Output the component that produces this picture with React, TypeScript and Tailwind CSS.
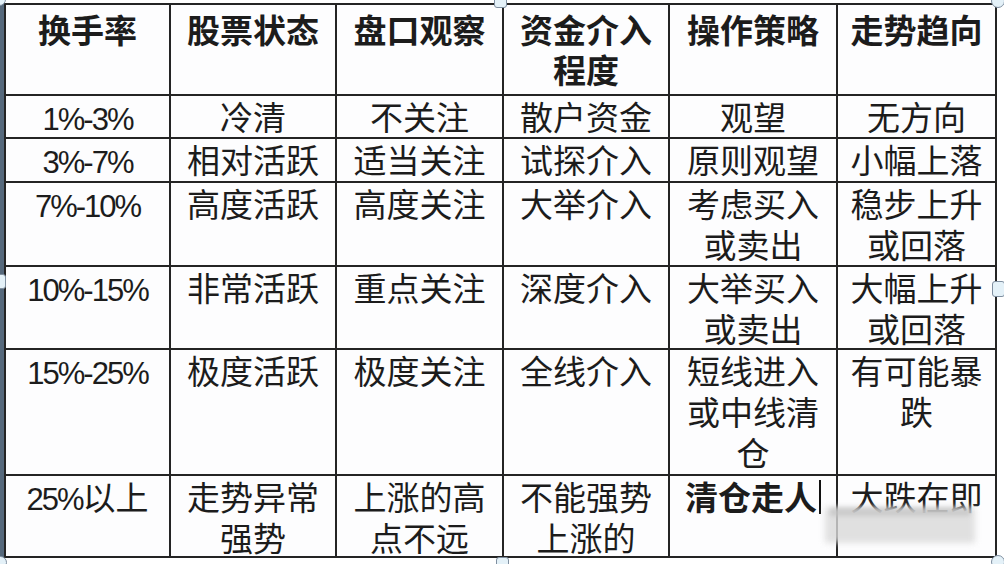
import React from "react";

const header: string[][] = [
  ["换手率"],
  ["股票状态"],
  ["盘口观察"],
  ["资金介入", "程度"],
  ["操作策略"],
  ["走势趋向"],
];

const rows: string[][][] = [
  [["1%-3%"], ["冷清"], ["不关注"], ["散户资金"], ["观望"], ["无方向"]],
  [["3%-7%"], ["相对活跃"], ["适当关注"], ["试探介入"], ["原则观望"], ["小幅上落"]],
  [["7%-10%"], ["高度活跃"], ["高度关注"], ["大举介入"], ["考虑买入", "或卖出"], ["稳步上升", "或回落"]],
  [["10%-15%"], ["非常活跃"], ["重点关注"], ["深度介入"], ["大举买入", "或卖出"], ["大幅上升", "或回落"]],
  [["15%-25%"], ["极度活跃"], ["极度关注"], ["全线介入"], ["短线进入", "或中线清", "仓"], ["有可能暴", "跌"]],
  [["25%以上"], ["走势异常", "强势"], ["上涨的高", "点不远"], ["不能强势", "上涨的"], ["清仓走人"], ["大跌在即"]],
];

function Line({ text }: { text: string }) {
  const parts = text.split(/([0-9%\-]+)/).filter((p) => p.length > 0);
  return (
    <div className="whitespace-nowrap">
      {parts.map((p, i) =>
        /^[0-9%\-]+$/.test(p) ? (
          <span key={i} className="font-['Liberation_Sans',sans-serif] text-[31px] tracking-[-2px]">
            {p}
          </span>
        ) : (
          <span key={i}>{p}</span>
        )
      )}
    </div>
  );
}

function Handle({ cls }: { cls: string }) {
  return <div className={"absolute border border-[#7f8fa0] bg-[#e4f1f8] " + cls} />;
}

export default function App() {
  return (
    <div className="relative flex h-[564px] w-[1004px] overflow-hidden bg-white font-['Noto_Sans_CJK_SC','Liberation_Sans',sans-serif] text-[#1c1c1c]">
      <div className="h-full w-[4px] bg-[#56697c]" />
      <div className="pt-[3px]">
        <div className="grid grid-cols-[163px_164px_165px_164px_166px_157px] grid-rows-[89px_41px_42px_82px_81px_124px_80px] gap-[2px] bg-[#242424] p-[2px]">
          {header.map((lines, i) => (
            <div key={"h" + i} className="bg-[#fdfdfe] pt-[4px] text-center text-[33px] font-bold leading-[40px]">
              {lines.map((l, j) => (
                <Line key={j} text={l} />
              ))}
            </div>
          ))}
          {rows.map((row, r) =>
            row.map((lines, c) => {
              const isCursor = r === 5 && c === 4;
              return (
                <div
                  key={r + "-" + c}
                  className={
                    "bg-[#fdfdfe] text-center text-[33px] leading-[41px] " +
                    (isCursor ? "font-bold" : "font-normal")
                  }
                >
                  {isCursor ? (
                    <div className="flex items-center justify-center whitespace-nowrap">
                      <span>清仓走人</span>
                      <span className="ml-[2px] inline-block h-[34px] w-[2px] bg-[#111]" />
                    </div>
                  ) : (
                    lines.map((l, j) => <Line key={j} text={l} />)
                  )}
                </div>
              );
            })
          )}
        </div>
      </div>

      {/* blurred watermark */}
      <div className="absolute left-[825px] top-[507px] h-[36px] w-[150px] bg-[#d9d9d9] opacity-80 blur-[3px]" />
      <div className="absolute left-[830px] top-[508px] h-[8px] w-[140px] bg-[#c2c2c2] opacity-70 blur-[2px]" />

      {/* selection handles */}
      <Handle cls="left-[-7px] top-[-7px] h-[13px] w-[13px] rounded-full" />
      <Handle cls="left-[494px] top-[-4px] h-[12px] w-[13px] rounded-[3px]" />
      <Handle cls="left-[991px] top-[-6px] h-[14px] w-[14px] rounded-full" />
      <Handle cls="left-[-6px] top-[274px] h-[15px] w-[12px] rounded-[3px]" />
      <Handle cls="left-[992px] top-[281px] h-[16px] w-[13px] rounded-[3px]" />
      <Handle cls="left-[-6px] top-[556px] h-[13px] w-[13px] rounded-full" />
      <Handle cls="left-[496px] top-[557px] h-[12px] w-[13px] rounded-[3px]" />
      <Handle cls="left-[991px] top-[555px] h-[14px] w-[14px] rounded-full" />
    </div>
  );
}
